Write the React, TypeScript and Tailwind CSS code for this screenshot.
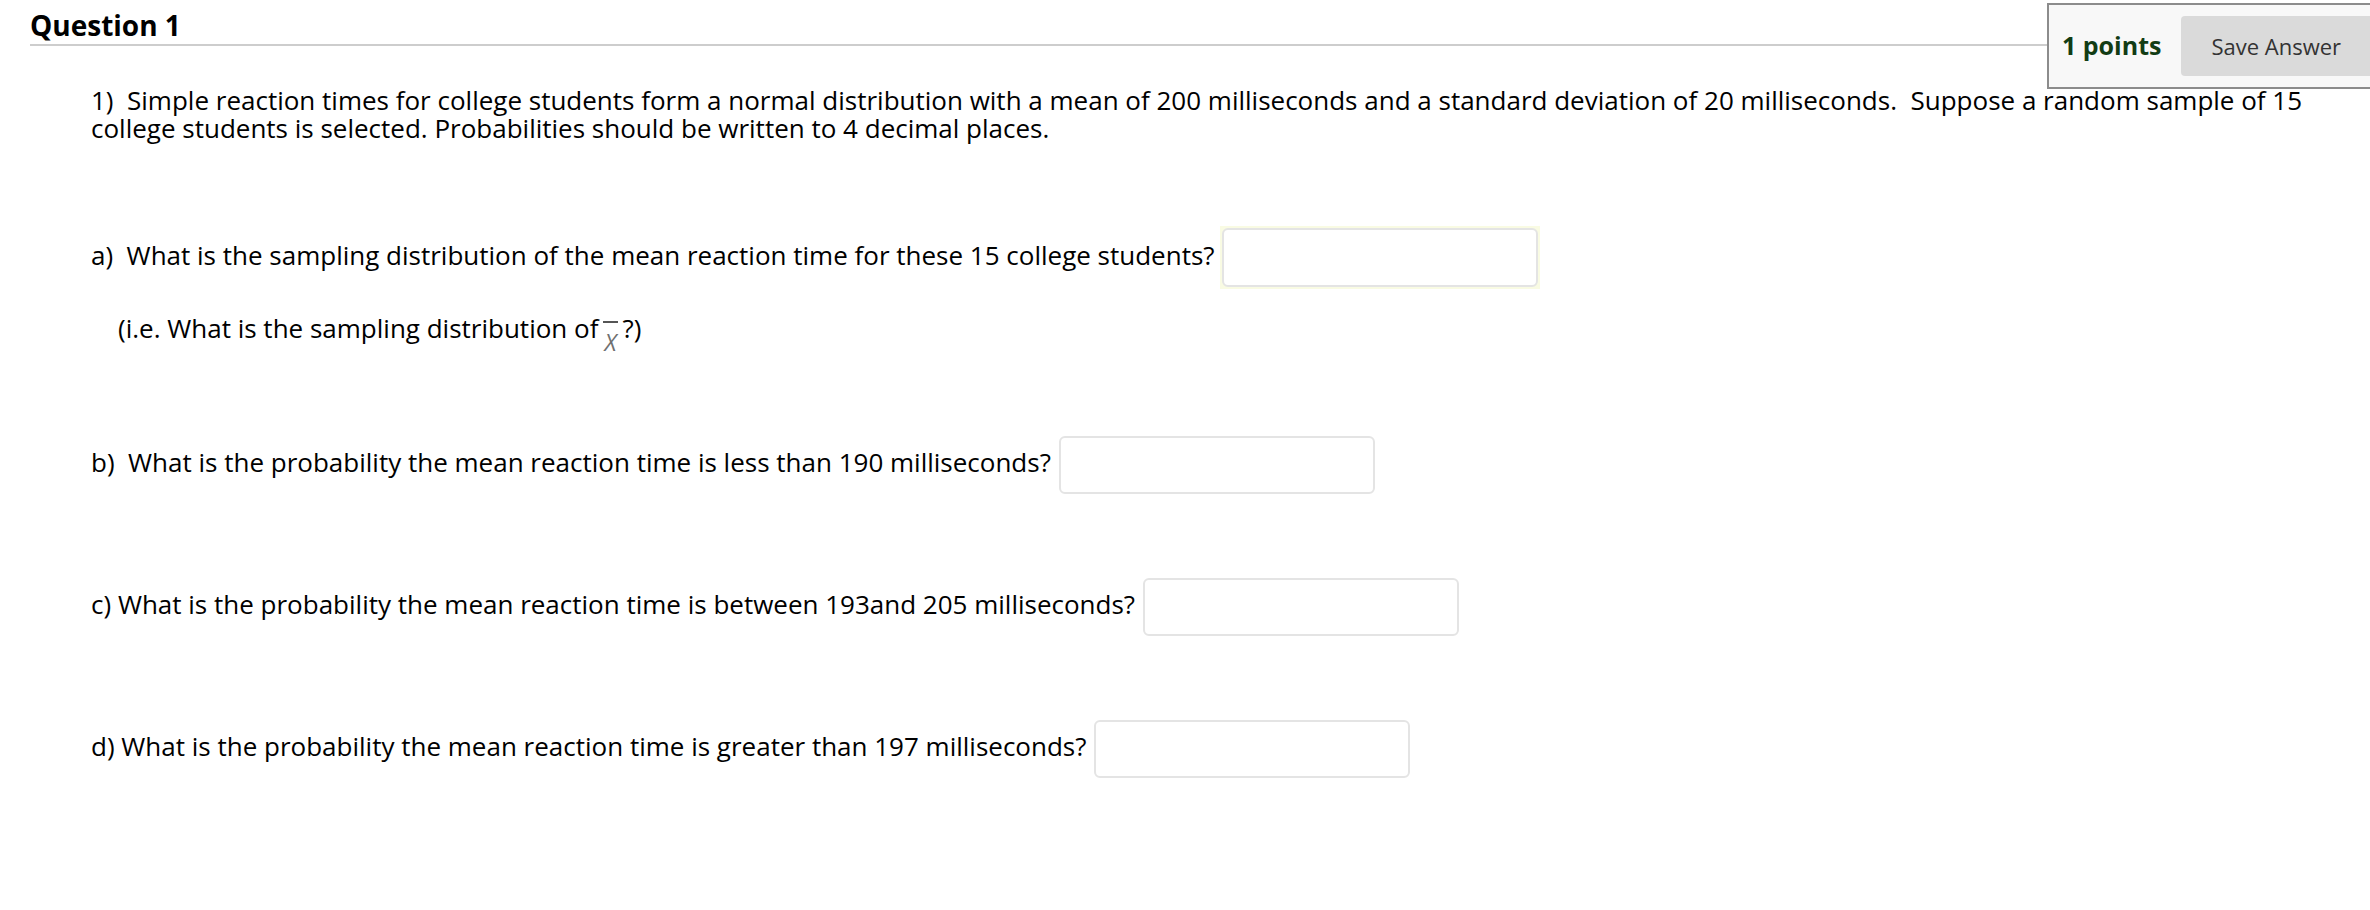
export default function App() {
  const questions = [
    { id: "a", text: "a)\u00a0 What is the sampling distribution of the mean reaction time for these 15 college students?" },
    { id: "b", text: "b)\u00a0 What is the probability the mean reaction time is less than 190 milliseconds?" },
    { id: "c", text: "c) What is the probability the mean reaction time is between 193and 205 milliseconds?" },
    { id: "d", text: "d) What is the probability the mean reaction time is greater than 197 milliseconds?" },
  ];

  return (
    <div
      className="h-[910px] w-full overflow-hidden bg-white text-black"
      style={{ fontFamily: '"Open Sans", "Noto Sans", sans-serif' }}
    >
      <div className="flex h-[46px] items-start pl-[30px]">
        <div className="h-[46px] flex-1 border-b-2 border-[#cdcdcd] pt-[6px]">
          <h2 className="text-[28px] font-bold leading-[38px]">Question 1</h2>
        </div>
        <div className="relative z-10 mt-[3px] flex h-[86px] w-[323px] shrink-0 items-center border-y-2 border-l-2 border-[#8c8c8c] bg-[#f8f8f8] pl-[13px]">
          <span className="text-[25px] font-bold text-[#123c14]">1 points</span>
          <button
            type="button"
            className="ml-[20px] flex h-[60px] flex-1 items-center rounded-l-[4px] bg-[#dadada] pl-[30px] text-[22px] text-[#333]"
          >
            Save Answer
          </button>
        </div>
      </div>

      <div className="pl-[91px] text-[26px] leading-[28px]">
        <p className="mt-[40px] w-[2250px]">
          1)&nbsp; Simple reaction times for college students form a normal distribution with a mean of 200 milliseconds
          and a standard deviation of 20 milliseconds.&nbsp; Suppose a random sample of 15 college students is selected.
          Probabilities should be written to 4 decimal places.
        </p>

        <div className="mt-[84px] flex items-center">
          <span className="mb-[6px]">{questions[0].text}</span>
          <div className="ml-[5px] bg-[#f9fbe3] p-[2px]">
            <input type="text" className="block h-[59px] w-[316px] rounded-[6px] border-2 border-[#e4e4e4] bg-white" />
          </div>
        </div>

        <p className="mt-[23px] pl-[27px]">
          (i.e. What is the sampling distribution of
          <span className="relative ml-[5px] mr-[1px] inline-block h-[1em] w-[18px] align-baseline">
            <span className="absolute left-0 top-[9px] h-[2px] w-[15px] bg-[#555]" />
            <span className="absolute left-[1px] top-[19px] text-[23px] leading-none italic text-[#707070]">X</span>
          </span>
          ?)
        </p>

        {questions.slice(1).map((q, i) => (
          <div key={q.id} className={`flex items-center ${i === 0 ? "mt-[94px]" : "mt-[84px]"}`}>
            <span className="mb-[6px]">{q.text}</span>
            <input
              type="text"
              className="ml-[8px] block h-[58px] w-[316px] rounded-[6px] border-2 border-[#e4e4e4] bg-white"
            />
          </div>
        ))}
      </div>
    </div>
  );
}
